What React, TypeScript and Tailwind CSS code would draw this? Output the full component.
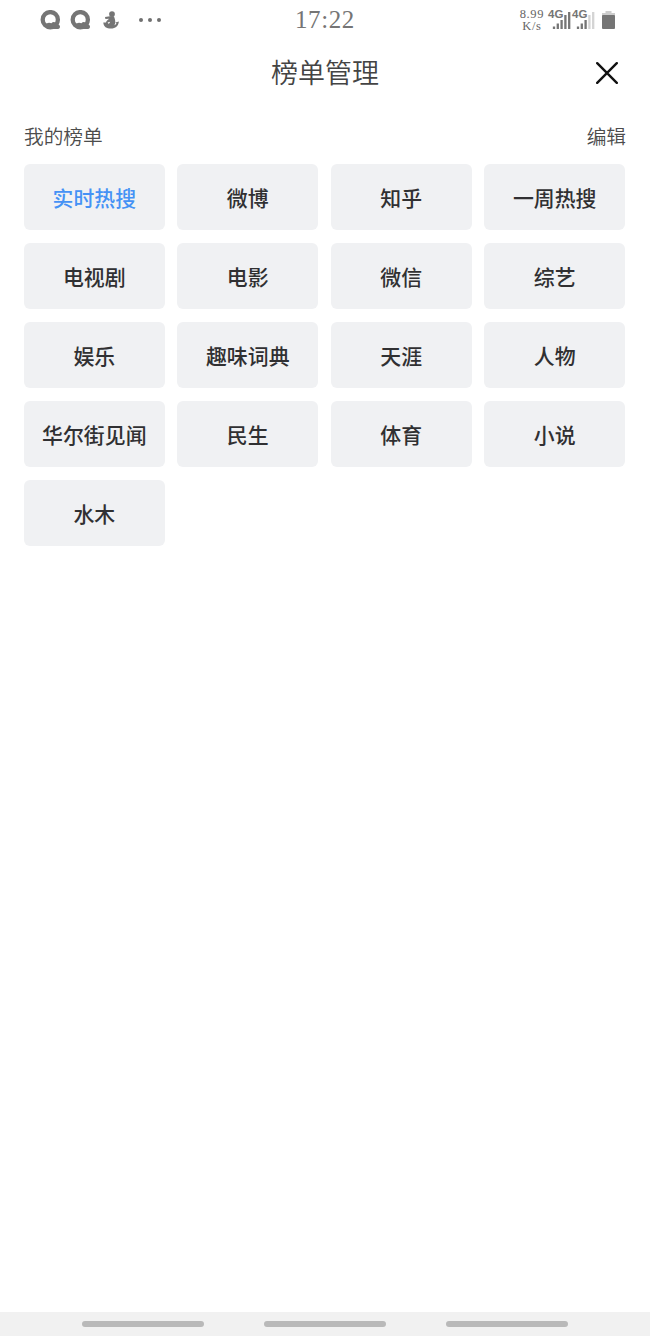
const boards = [
  '实时热搜', '微博', '知乎', '一周热搜',
  '电视剧', '电影', '微信', '综艺',
  '娱乐', '趣味词典', '天涯', '人物',
  '华尔街见闻', '民生', '体育', '小说',
  '水木',
];

function BrowserIcon() {
  return (
    <svg width="21" height="20" viewBox="0 0 21 20" fill="none">
      <circle cx="10.3" cy="9.7" r="7.6" stroke="#757575" strokeWidth="4.3" />
      <path d="M4 15.5C6.5 12.4 9.4 12.2 11.4 13.2C13 11.6 14.8 11.8 15.8 13.4C18 13.6 20 14.8 20 16.6C20 18 19.4 19 18 19H9Z" fill="#757575" />
    </svg>
  );
}

function FigureIcon() {
  return (
    <svg width="16" height="18" viewBox="0 0 16 18" fill="#757575">
      <circle cx="9" cy="3.1" r="2.9" />
      <path d="M6.8 5.2L2 6L2.4 8L6 7.8C5.4 9 3.2 9.6 3 11.4H0.3C0.6 15.5 3.5 17.6 8 17.6S15.4 15.2 15.9 10.6L12.4 11.4L13.4 12.6C12.8 13.6 12.2 14 11.4 14.2C13 12 12.2 8 10.8 5.2Z" />
      <path d="M4.6 11.4L7.2 10.8L5.8 13Z" fill="#fff" />
    </svg>
  );
}

function Signal({ weak = false }: { weak?: boolean }) {
  const faded = weak ? '#d4d4d4' : '#757575';
  return (
    <span className="relative block h-[22px] w-[24px]">
      <svg className="block" width="24" height="22" viewBox="0 0 24 22">
        <path d="M6 17.5v2.5M9.8 14.5v5.5M13.6 11v9" stroke="#757575" strokeWidth="2.3" />
        <path d="M17.4 6v14M21.2 3v17" stroke={faded} strokeWidth="2.3" />
      </svg>
      <span className="absolute top-0 left-0 text-[11.5px] leading-[11px] font-bold text-[#757575]">4G</span>
    </span>
  );
}

function StatusBar() {
  return (
    <div className="grid h-10 grid-cols-3">
      <div className="flex h-[39px] items-center pl-10">
        <BrowserIcon />
        <span className="w-[9px]" />
        <BrowserIcon />
        <span className="w-[12px]" />
        <FigureIcon />
        <span className="flex gap-[5px] pl-[20px]">
          <i className="size-[4px] rounded-full bg-[#707070]" />
          <i className="size-[4px] rounded-full bg-[#707070]" />
          <i className="size-[4px] rounded-full bg-[#707070]" />
        </span>
      </div>
      <div className="flex items-center justify-center font-['Liberation_Serif',serif] text-[25px] tracking-[0.6px] text-[#757575]">
        17:22
      </div>
      <div className="flex h-10 items-center justify-end pr-[35px]">
        <div className="mr-[4px] text-center font-['Liberation_Serif',serif] text-[12.5px] leading-[12px] tracking-[0.6px] text-[#666]">
          <div>8.99</div>
          <div>K/s</div>
        </div>
        <div className="flex pb-px">
          <Signal />
          <Signal weak />
        </div>
        <svg className="ml-[6px]" width="13" height="20" viewBox="0 0 13 20">
          <path d="M3.5 1h6v2H13v3H0V3h3.5z" fill="#cdcdcd" />
          <rect y="5" width="13" height="14" rx="1" fill="#757575" />
        </svg>
      </div>
    </div>
  );
}

export default function App() {
  return (
    <div className="flex h-[1336px] w-[650px] flex-col overflow-hidden bg-white font-['Liberation_Sans','Noto_Sans_CJK_SC',sans-serif]">
      <StatusBar />
      <header className="grid h-[66px] grid-cols-[1fr_auto_1fr] items-center">
        <span />
        <h1 className="pt-[3px] text-[27px] leading-none font-[350] text-[#444]">榜单管理</h1>
        <button className="justify-self-end pr-8" aria-label="关闭">
          <svg width="22" height="22" viewBox="0 0 22 22" fill="none" stroke="#111" strokeWidth="2.4" strokeLinecap="round">
            <path d="M1.2 1.2L20.8 20.8M20.8 1.2L1.2 20.8" />
          </svg>
        </button>
      </header>
      <main className="flex-1 pr-6 pl-6">
        <div className="flex h-[58.3px] items-center justify-between pt-[5px] text-[19.7px] font-[350] text-[#4c4c4c]">
          <h2>我的榜单</h2>
          <button>编辑</button>
        </div>
        <div className="mr-px grid auto-rows-[66.2px] grid-cols-4 gap-[12.8px]">
          {boards.map((name, i) => (
            <button
              key={name}
              className={`flex items-center justify-center rounded-[6px] bg-[#f0f1f3] pt-[2.6px] text-[20.9px] font-medium whitespace-nowrap ${i === 0 ? 'text-[#4592f5]' : 'text-[#303032]'}`}
            >
              {name}
            </button>
          ))}
        </div>
      </main>
      <nav className="flex h-6 items-center justify-center gap-[60px] bg-[#f1f1f1]">
        <span className="h-[6px] w-[122px] rounded-full bg-[#b9b9b9]" />
        <span className="h-[6px] w-[122px] rounded-full bg-[#b9b9b9]" />
        <span className="h-[6px] w-[122px] rounded-full bg-[#b9b9b9]" />
      </nav>
    </div>
  );
}
